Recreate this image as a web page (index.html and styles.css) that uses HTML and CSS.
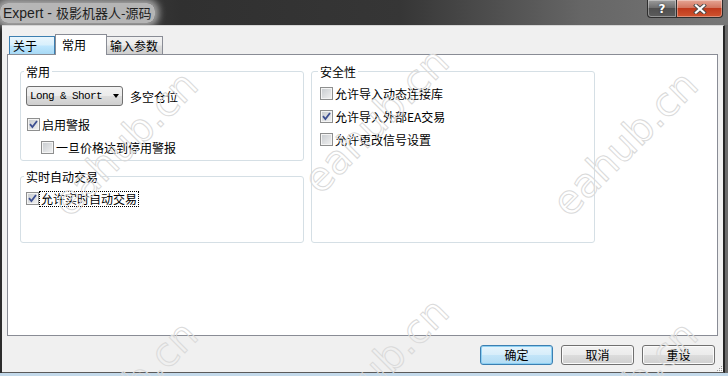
FILE: index.html
```html
<!DOCTYPE html>
<html lang="zh">
<head>
    <meta charset="UTF-8">
    <meta name="viewport" content="width=device-width, initial-scale=1.0">
    <title>Expert - 极影机器人-源码</title>
    <link rel="stylesheet" href="styles.css">
</head>
<body>
    <div class="window">
        <div class="titlebar">
            <span class="title">Expert - <span class="title-cn">极影机器人-源码</span></span>
            <div class="caption-buttons">
                <div class="cap-btn help">?</div>
                <div class="cap-btn close">
                    <svg width="14" height="10" viewBox="0 0 14 10">
                        <path d="M3 1.5 L11 8.5 M11 1.5 L3 8.5" stroke="#4a4a4a" stroke-width="4" stroke-linecap="square"/>
                        <path d="M3 1.5 L11 8.5 M11 1.5 L3 8.5" stroke="#fff" stroke-width="2.2" stroke-linecap="square"/>
                    </svg>
                </div>
            </div>
        </div>
        <div class="frame">
            <div class="client">
                <div class="tabs">
                    <div class="tab tab-about">关于</div>
                    <div class="tab tab-common active">常用</div>
                    <div class="tab tab-inputs">输入参数</div>
                </div>
                <div class="panel">
                    <div class="group group-common">
                        <div class="legend">常用</div>
                        <div class="combo-row">
                            <div class="combo">
                                <span class="combo-text">Long &amp; Short</span>
                                <span class="arrow"></span>
                            </div>
                            <span class="combo-label">多空仓位</span>
                        </div>
                        <div class="check-row first">
                            <span class="box"><svg width="9" height="9" viewBox="0 0 9 9"><path d="M1 4.2 L3.4 7 L8 1" fill="none" stroke="#3d4f91" stroke-width="1.8"/></svg></span>
                            <span>启用警报</span>
                        </div>
                        <div class="check-row sub">
                            <span class="box"></span>
                            <span>一旦价格达到停用警报</span>
                        </div>
                    </div>

                    <div class="group group-security">
                        <div class="legend">安全性</div>
                        <div class="check-row first">
                            <span class="box"></span>
                            <span>允许导入动态连接库</span>
                        </div>
                        <div class="check-row">
                            <span class="box"><svg width="9" height="9" viewBox="0 0 9 9"><path d="M1 4.2 L3.4 7 L8 1" fill="none" stroke="#3d4f91" stroke-width="1.8"/></svg></span>
                            <span>允许导入外部EA交易</span>
                        </div>
                        <div class="check-row">
                            <span class="box"></span>
                            <span>允许更改信号设置</span>
                        </div>
                    </div>

                    <div class="group group-auto">
                        <div class="legend">实时自动交易</div>
                        <div class="check-row first">
                            <span class="box"><svg width="9" height="9" viewBox="0 0 9 9"><path d="M1 4.2 L3.4 7 L8 1" fill="none" stroke="#3d4f91" stroke-width="1.8"/></svg></span>
                            <span class="focus">允许实时自动交易</span>
                        </div>
                    </div>
                </div>
                <div class="buttons">
                    <div class="btn default">确定</div>
                    <div class="btn">取消</div>
                    <div class="btn">重设</div>
                </div>
                <div class="grip">
                    <svg width="7" height="7" viewBox="0 0 7 7">
                        <g fill="#fff">
                            <rect x="6" y="2" width="1" height="1"/>
                            <rect x="4" y="4" width="1" height="1"/><rect x="6" y="4" width="1" height="1"/>
                            <rect x="2" y="6" width="1" height="1"/><rect x="4" y="6" width="1" height="1"/><rect x="6" y="6" width="1" height="1"/>
                        </g>
                        <g fill="#9a9a9a">
                            <rect x="5" y="1" width="1" height="1"/>
                            <rect x="3" y="3" width="1" height="1"/><rect x="5" y="3" width="1" height="1"/>
                            <rect x="1" y="5" width="1" height="1"/><rect x="3" y="5" width="1" height="1"/><rect x="5" y="5" width="1" height="1"/>
                        </g>
                    </svg>
                </div>
            </div>
        </div>
        <div class="bottom-edge"></div>

        <div class="wm wm-1">eahub.cn</div>
        <div class="wm wm-2">eahub.cn</div>
        <div class="wm wm-3">eahub.cn</div>
        <div class="wm wm-4">eahub.cn</div>
        <div class="wm wm-5">eahub.cn</div>
        <div class="wm wm-6">eahub.cn</div>
    </div>
</body>
</html>
```

FILE: styles.css
```css
body {
    margin: 0;
    background: #5a5a5a;
    font-family: "Noto Sans CJK SC", sans-serif;
    font-size: 12px;
    color: #000;
}
.window {
    position: relative;
    width: 728px;
    height: 376px;
    overflow: hidden;
}

/* title bar */
.titlebar {
    height: 25px;
    display: flex;
    justify-content: space-between;
    background: linear-gradient(to right, #4d4d4d 0%, #303030 25%, #363636 55%, #666 80%, #777 100%);
}
.title {
    display: inline-block;
    height: 20px;
    margin-top: 3px;
    padding: 0 4px 0 3px;
    line-height: 20px;
    font-family: "Liberation Sans", "Noto Sans CJK SC", sans-serif;
    font-size: 14px;
    color: #1e1e1e;
    background: rgba(192, 192, 192, 0.92);
    border-radius: 8px;
    box-shadow: 0 0 7px 4px rgba(192, 192, 192, 0.8);
}
.title-cn {
    font-family: "Noto Sans CJK SC", sans-serif;
    font-size: 13px;
}
.caption-buttons {
    display: flex;
    padding-right: 5px;
}
.cap-btn {
    height: 18px;
    box-sizing: border-box;
    border: 1px solid #2e2e2e;
    border-top: none;
    display: flex;
    align-items: center;
    justify-content: center;
    box-shadow: inset 0 0 0 1px rgba(255, 255, 255, 0.35);
}
.help {
    width: 29px;
    border-right: none;
    border-radius: 0 0 0 4px;
    background: linear-gradient(#9c9c9c, #6f6f6f 45%, #505050 50%, #5c5c5c);
    color: #fff;
    font-family: "DejaVu Sans", sans-serif;
    font-weight: bold;
    font-size: 12px;
    text-shadow: 0 0 2px #222;
}
.close {
    width: 47px;
    border-radius: 0 0 4px 0;
    background: linear-gradient(#e6a594, #d27660 45%, #c0391c 50%, #d0542f);
}

/* frame and client */
.frame {
    display: flex;
    background: linear-gradient(to right, #2c2c2c 0, #2c2c2c 2px, #6c6c6c 2px);
    padding-left: 2px;
    padding-right: 3px;
}
.client {
    position: relative;
    flex: 1;
    height: 348px;
    box-sizing: border-box;
    background: #f0f0f0;
    border-top: 1px solid #d6d6d6;
    border-right: 2px solid #262626;
    border-bottom: 1px solid #5a5a5a;
    padding: 8px 5px 0 5px;
}
.bottom-edge {
    height: 3px;
    background: #c3d9ea;
}

/* tabs */
.tabs {
    display: flex;
    height: 20px;
    padding-left: 2px;
}
.tab {
    height: 18px;
    margin-top: 2px;
    box-sizing: border-box;
    border: 1px solid #898c95;
    border-bottom: none;
    padding-left: 3px;
    line-height: 17px;
    background: linear-gradient(#f2f2f2, #ebebeb 45%, #dddddd 55%, #cfcfcf);
}
.tab-about {
    width: 46px;
    border-color: #3c7fb1;
    background: linear-gradient(#eaf6fd, #d9f0fc 45%, #bee6fd 55%, #a7d9f5);
}
.tab-common {
    width: 52px;
    padding-left: 6px;
}
.tab-inputs {
    width: 56px;
    border-left: none;
}
.tab.active {
    position: relative;
    z-index: 1;
    height: 21px;
    margin-top: 0;
    background: #fff;
    line-height: 19px;
}

/* panel */
.panel {
    height: 282px;
    box-sizing: border-box;
    border: 1px solid #898c95;
    background: #fff;
    padding: 16px 0 0 12px;
    display: grid;
    grid-template-columns: 284px 284px;
    grid-template-rows: 90px 67px;
    column-gap: 7px;
    row-gap: 15px;
    align-content: start;
}
.group {
    box-sizing: border-box;
    border: 1px solid #d5dfe5;
    border-radius: 3px;
    padding-left: 5px;
}
.legend {
    width: fit-content;
    height: 15px;
    line-height: 15px;
    margin: -8px 0 0 -2px;
    padding: 0 2px;
    background: #fff;
}
.group-common {
    grid-column: 1;
    grid-row: 1;
}
.group-auto {
    grid-column: 1;
    grid-row: 2;
}
.group-security {
    grid-column: 2;
    grid-row: 1 / 3;
    padding-left: 8px;
}

.combo-row {
    display: flex;
    align-items: center;
    margin-top: 7px;
}
.combo {
    width: 97px;
    height: 20px;
    box-sizing: border-box;
    border: 1px solid #707070;
    border-radius: 3px;
    background: linear-gradient(#f2f2f2, #ebebeb 50%, #dddddd 50%, #cfcfcf);
    display: flex;
    align-items: center;
    padding-left: 3px;
}
.combo-text {
    font-family: "Liberation Mono", monospace;
    font-size: 11px;
    letter-spacing: -0.6px;
    white-space: nowrap;
}
.arrow {
    margin-left: auto;
    margin-right: 3px;
    width: 0;
    height: 0;
    border-left: 3.5px solid transparent;
    border-right: 3.5px solid transparent;
    border-top: 4px solid #000;
}
.combo-label {
    margin-left: 7px;
}

.check-row {
    display: flex;
    align-items: center;
    height: 23px;
    white-space: nowrap;
}
.group-common .check-row.first {
    margin-top: 7px;
    margin-left: 1px;
}
.group-security .check-row.first,
.group-auto .check-row.first {
    margin-top: 3px;
}
.check-row.sub {
    margin-left: 15px;
}
.box {
    width: 13px;
    height: 13px;
    box-sizing: border-box;
    flex: none;
    margin-right: 2px;
    border: 1px solid #8e8f8f;
    background: linear-gradient(135deg, #c6cace, #f2f2f2);
    box-shadow: inset 0 0 0 1px #f4f4f4;
    display: flex;
    align-items: center;
    justify-content: center;
}
.focus {
    line-height: 14px;
    padding: 0 1px;
    margin-left: -1px;
    outline: 1px dotted #000;
}

/* buttons */
.buttons {
    display: flex;
    justify-content: flex-end;
    gap: 8px;
    margin-top: 9px;
    padding-right: 3px;
}
.btn {
    width: 73px;
    height: 20px;
    box-sizing: border-box;
    border: 1px solid #707070;
    border-radius: 3px;
    background: linear-gradient(#f2f2f2, #ebebeb 50%, #dddddd 50%, #cfcfcf);
    box-shadow: inset 0 0 0 1px #fbfbfb;
    text-align: center;
    line-height: 18px;
}
.btn.default {
    border-color: #3c7fb1;
    background: linear-gradient(#e5f4fc, #d6edfa 50%, #c3e5f8 50%, #b3dcf4);
    box-shadow: inset 0 0 0 1px #8ccff2;
}
.grip {
    position: absolute;
    right: 0;
    bottom: 0;
    width: 7px;
    height: 7px;
    line-height: 0;
}

/* watermark */
.wm {
    position: absolute;
    width: 186px;
    height: 40px;
    line-height: 40px;
    font-family: "DejaVu Sans", sans-serif;
    font-size: 40px;
    white-space: nowrap;
    color: transparent;
    -webkit-text-stroke: 1px #dadada;
    transform: rotate(-45deg);
    pointer-events: none;
}
.wm-1 { left: 32px; top: 123px; }
.wm-2 { left: 283px; top: 100px; }
.wm-3 { left: 532px; top: 123px; }
.wm-4 { left: 32px; top: 373px; }
.wm-5 { left: 283px; top: 350px; }
.wm-6 { left: 532px; top: 373px; }
```
